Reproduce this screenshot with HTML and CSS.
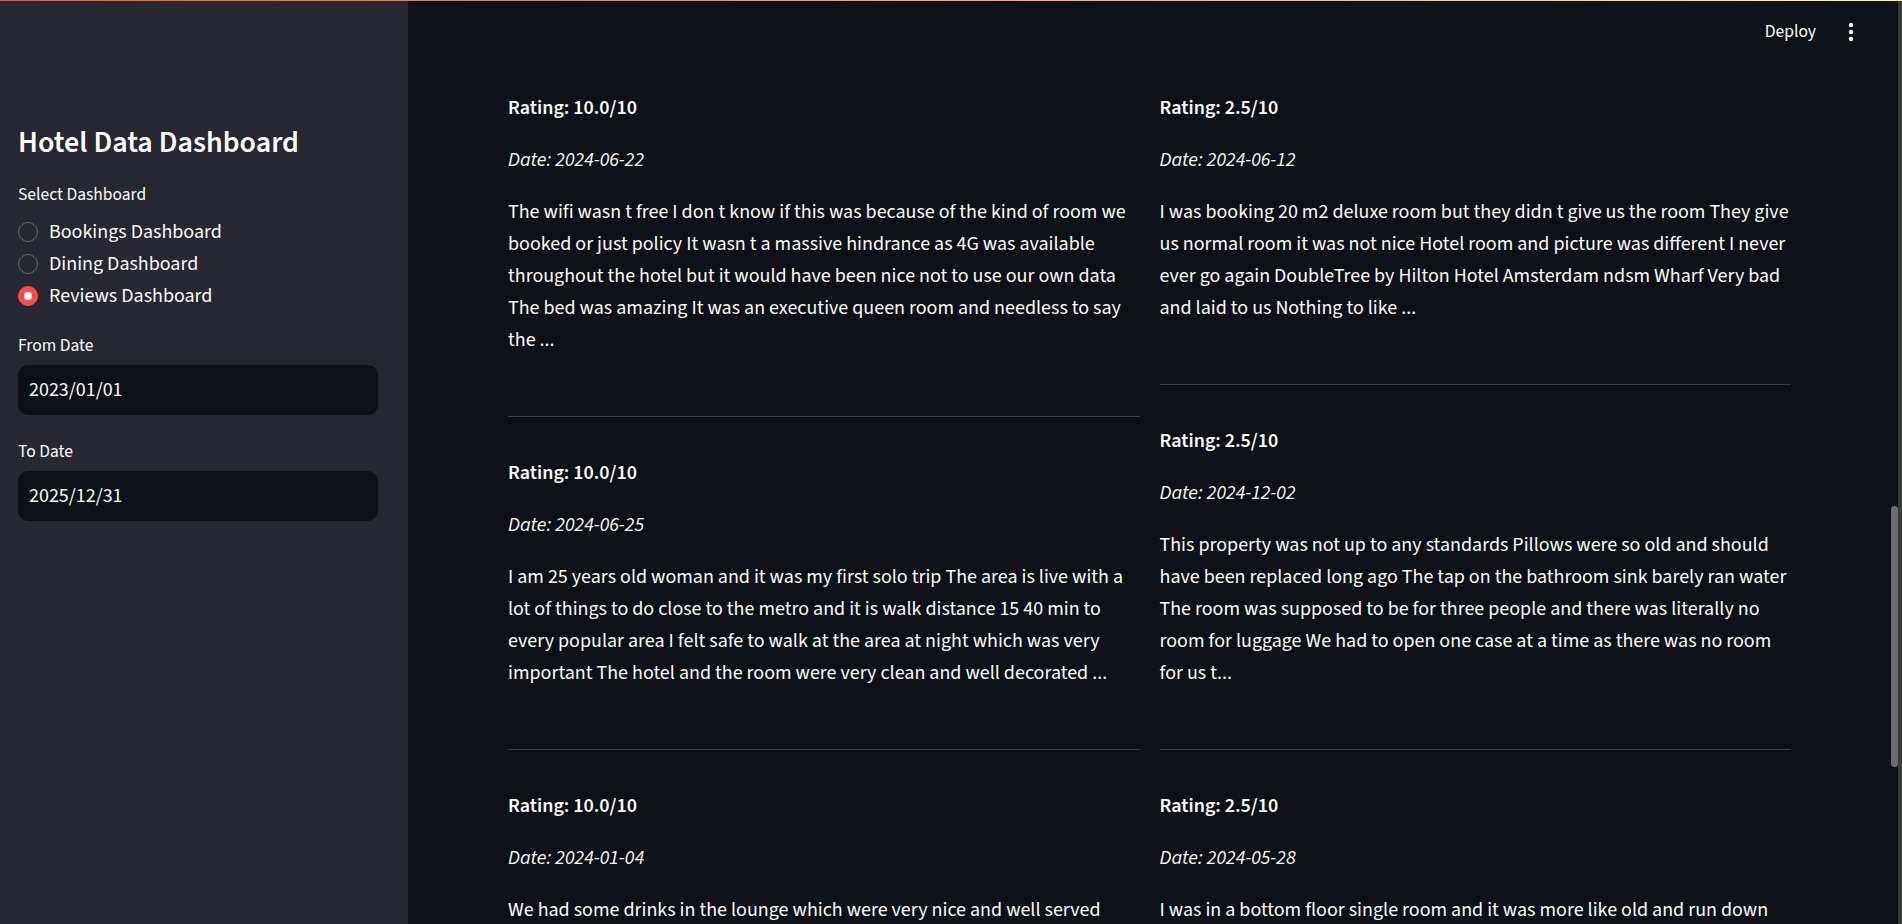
FILE: index.html
```html
<!DOCTYPE html>
<html lang="en">
<head>
<meta charset="utf-8">
<title>Hotel Data Dashboard</title>
<link rel="stylesheet" href="styles.css">
</head>
<body>
<div class="decoration"></div>
<div class="app">
  <aside class="sidebar">
    <h1 class="sb-title">Hotel Data Dashboard</h1>
    <div class="field field-radio">
      <div class="label label-radio">Select Dashboard</div>
      <div class="radios">
        <label class="radio"><span class="dot"></span><span>Bookings Dashboard</span></label>
        <label class="radio"><span class="dot"></span><span>Dining Dashboard</span></label>
        <label class="radio checked"><span class="dot"></span><span>Reviews Dashboard</span></label>
      </div>
    </div>
    <div class="field">
      <div class="label">From Date</div>
      <div class="input">2023/01/01</div>
    </div>
    <div class="field">
      <div class="label">To Date</div>
      <div class="input">2025/12/31</div>
    </div>
  </aside>
  <main class="main">
    <header class="topbar">
      <span class="deploy">Deploy</span>
      <svg class="kebab" width="6" height="20" viewBox="0 0 6 20"><circle cx="3" cy="3" r="2.2" fill="#fafafa"/><circle cx="3" cy="10" r="2.2" fill="#fafafa"/><circle cx="3" cy="17" r="2.2" fill="#fafafa"/></svg>
    </header>
    <div class="content">
      <div class="col">
        <section class="review">
          <p class="rating">Rating: 10.0/10</p>
          <p class="date">Date: 2024-06-22</p>
          <p class="body">The wifi wasn t free I don t know if this was because of the kind of room we booked or just policy It wasn t a massive hindrance as 4G was available throughout the hotel but it would have been nice not to use our own data The bed was amazing It was an executive queen room and needless to say the ...</p>
        </section>
        <hr class="sep">
        <section class="review">
          <p class="rating">Rating: 10.0/10</p>
          <p class="date">Date: 2024-06-25</p>
          <p class="body">I am 25 years old woman and it was my first solo trip The area is live with a lot of things to do close to the metro and it is walk distance 15 40 min to every popular area I felt safe to walk at the area at night which was very important The hotel and the room were very clean and well decorated ...</p>
        </section>
        <hr class="sep">
        <section class="review">
          <p class="rating">Rating: 10.0/10</p>
          <p class="date">Date: 2024-01-04</p>
          <p class="body">We had some drinks in the lounge which were very nice and well served unfortunately the ...</p>
        </section>
      </div>
      <div class="col">
        <section class="review">
          <p class="rating">Rating: 2.5/10</p>
          <p class="date">Date: 2024-06-12</p>
          <p class="body">I was booking 20 m2 deluxe room but they didn t give us the room They give us normal room it was not nice Hotel room and picture was different I never ever go again DoubleTree by Hilton Hotel Amsterdam ndsm Wharf Very bad and laid to us Nothing to like ...</p>
        </section>
        <hr class="sep">
        <section class="review">
          <p class="rating">Rating: 2.5/10</p>
          <p class="date">Date: 2024-12-02</p>
          <p class="body">This property was not up to any standards Pillows were so old and should have been replaced long ago The tap on the bathroom sink barely ran water The room was supposed to be for three people and there was literally no room for luggage We had to open one case at a time as there was no room for us t...</p>
        </section>
        <hr class="sep">
        <section class="review">
          <p class="rating">Rating: 2.5/10</p>
          <p class="date">Date: 2024-05-28</p>
          <p class="body">I was in a bottom floor single room and it was more like old and run down compared ...</p>
        </section>
      </div>
    </div>
  </main>
  <div class="scrolltrack"><div class="thumb"></div></div>
  <div class="edge"></div>
</div>
</body>
</html>
```
FILE: styles.css
```css
* { box-sizing: border-box; }
html, body { margin: 0; padding: 0; }
body {
  background: #0e1117;
  color: #fafafa;
  font-family: "Source Sans 3", "Lato", "Liberation Sans", sans-serif;
  overflow: hidden;
}
.decoration {
  position: absolute;
  top: 0; left: 0; right: 0;
  height: 1px;
  background: linear-gradient(90deg, #ff4b4b, #fffd80);
  z-index: 10;
}
.app {
  display: flex;
  height: 924px;
  overflow: hidden;
}
.sidebar {
  width: 408px;
  flex: 0 0 408px;
  background: #262730;
  padding: 122px 30px 0 18px;
}
.sb-title {
  margin: 0 0 19px;
  font-size: 30px;
  font-weight: 600;
  line-height: 42px;
}
.field { margin-bottom: 25px; }
.field-radio { margin-bottom: 22px; }
.label {
  font-size: 17.5px;
  line-height: 24px;
  margin-bottom: 7px;
}
.label-radio { margin-bottom: 9px; }
.radios { display: flex; flex-direction: column; }
.radio {
  display: flex;
  align-items: center;
  gap: 11px;
  height: 32px;
  font-size: 20px;
}
.dot {
  width: 20px; height: 20px;
  border-radius: 50%;
  border: 1px solid #6a6c73;
  flex: 0 0 20px;
  display: flex; align-items: center; justify-content: center;
}
.radio.checked .dot { background: #ff4b4b; border-color: #ff4b4b; }
.radio.checked .dot::after {
  content: ""; width: 8px; height: 8px; border-radius: 50%; background: #fafafa;
}
.input {
  height: 50px;
  background: #0e1117;
  border-radius: 10px;
  padding: 0 11px;
  display: flex; align-items: center;
  font-size: 20px;
}
.main {
  flex: 1 1 auto;
  display: flex;
  flex-direction: column;
  min-width: 0;
}
.topbar {
  height: 75px;
  flex: 0 0 75px;
  display: flex;
  align-items: center;
  justify-content: flex-end;
  padding: 0 37px 12px 0;
  gap: 32px;
}
.deploy { font-size: 17.5px; }
.kebab { display: block; }
.content {
  display: grid;
  grid-template-columns: 1fr 1fr;
  gap: 20px;
  padding: 17px 100px 0;
  align-items: start;
}
.col { display: flex; flex-direction: column; }
.review p {
  margin: 0 0 20px;
  font-size: 20px;
  line-height: 32px;
}
.review p.body { margin-bottom: 60px; }
.rating { font-weight: 600; }
.date { font-style: italic; }
.sep {
  margin: 0 0 40px;
  border: 0;
  height: 1px;
  background: #3d3f45;
}
.scrolltrack {
  width: 7px;
  flex: 0 0 7px;
  position: relative;
}
.thumb {
  position: absolute;
  left: 0; top: 506px;
  width: 7px; height: 261px;
  border-radius: 4px;
  background: #6c6d72;
}
.edge { width: 4px; flex: 0 0 4px; background: #3a3a3c; }
```
